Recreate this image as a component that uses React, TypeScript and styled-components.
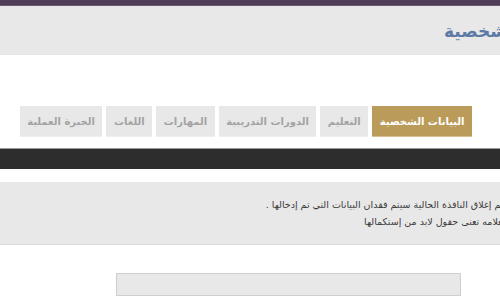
import React from "react";
import styled, { createGlobalStyle } from "styled-components";

const GlobalStyle = createGlobalStyle`
  html, body {
    margin: 0;
    padding: 0;
    background: #fff;
    overflow: hidden;
  }
  body {
    font-family: "DejaVu Sans", "Noto Sans", sans-serif;
  }
`;

const Page = styled.div`
  width: 500px;
  height: 300px;
  overflow: hidden;
  direction: rtl;
`;

const TopBar = styled.div`
  height: 5px;
  background: #4f3c56;
  border-bottom: 1px solid #6d5a72;
`;

const Header = styled.div`
  height: 49px;
  background: #e8e8e8;
  display: flex;
  align-items: center;
  overflow: hidden;
`;

const PageTitle = styled.h1`
  margin: 0 -88px 0 0;
  font-size: 17px;
  font-weight: bold;
  color: #5d79a5;
  white-space: nowrap;
  line-height: 1;
  padding-top: 2px;
`;

const TabsSection = styled.div`
  padding: 51px 28px 11px 0;
`;

const Tabs = styled.div`
  display: flex;
  gap: 4px;
`;

const Tab = styled.div<{ $active?: boolean }>`
  height: 31px;
  padding: 0 7.5px;
  display: flex;
  align-items: center;
  font-size: 10px;
  font-weight: bold;
  white-space: nowrap;
  background: ${(p) => (p.$active ? "#bb9b5a" : "#e8e8e8")};
  color: ${(p) => (p.$active ? "#ffffff" : "#a3a3a3")};
  border-bottom: 1px solid ${(p) => (p.$active ? "#d8c08e" : "#efefef")};
  box-sizing: border-box;
`;

const DarkBar = styled.div`
  height: 20px;
  background: #2d2d2d;
  border-top: 1px solid #9a9a9a;
`;

const InfoBox = styled.div`
  margin-top: 13px;
  height: 62px;
  background: #e8e8e8;
  border-bottom: 1px solid #dcdcdc;
  display: flex;
  flex-direction: column;
  justify-content: center;
  gap: 4px;
  overflow: hidden;
`;

const InfoLine = styled.p<{ $hidden: number }>`
  margin: 0 ${(p) => -p.$hidden}px 0 0;
  font-size: 9.5px;
  color: #3a3a3a;
  white-space: nowrap;
  line-height: 13px;
`;

const FormArea = styled.div`
  padding: 28px 39px 0 0;
`;

const Input = styled.input`
  display: block;
  width: 345px;
  height: 23px;
  box-sizing: border-box;
  background: #e8e8e8;
  border: 1px solid #cfcfcf;
  outline: none;
`;

const tabs = [
  "البيانات الشخصية",
  "التعليم",
  "الدورات التدريبية",
  "المهارات",
  "اللغات",
  "الخبرة العملية",
];

const App = () => {
  return (
    <Page>
      <GlobalStyle />
      <TopBar />
      <Header>
        <PageTitle>البيانات الشخصية</PageTitle>
      </Header>
      <TabsSection>
        <Tabs>
          {tabs.map((t, i) => (
            <Tab key={t} $active={i === 0}>
              {t}
            </Tab>
          ))}
        </Tabs>
      </TabsSection>
      <DarkBar />
      <InfoBox>
        <InfoLine $hidden={16}>إذا تم إغلاق النافذة الحالية سيتم فقدان البيانات التي تم إدخالها .</InfoLine>
        <InfoLine $hidden={16}>* العلامه تعنى حقول لابد من إستكمالها</InfoLine>
      </InfoBox>
      <FormArea>
        <Input type="text" />
      </FormArea>
    </Page>
  );
};

export default App;
